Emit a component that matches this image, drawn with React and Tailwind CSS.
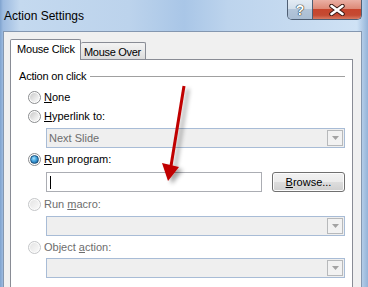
import React from "react";

function Radio({ checked = false, disabled = false }) {
  return (
    <div
      className={
        "flex h-[13px] w-[13px] shrink-0 items-center justify-center rounded-full border " +
        (disabled ? "border-[#c4c6c8] bg-[#fbfbfb]" : "border-[#8a8c8e] bg-white")
      }
    >
      {checked ? (
        <div className="h-[9px] w-[9px] rounded-full border border-[#1a4f7a] bg-[radial-gradient(circle_at_40%_35%,#a9e3ff_0%,#3fa0dc_45%,#0d4f86_100%)]" />
      ) : (
        <div
          className={
            "h-[9px] w-[9px] rounded-full " +
            (disabled
              ? "bg-[linear-gradient(135deg,#e4e4e4,#f9f9f9)]"
              : "bg-[linear-gradient(135deg,#c9c9c9,#eeeeee_70%,#f7f7f7)]")
          }
        />
      )}
    </div>
  );
}

function ComboBox({ text }) {
  return (
    <div className="ml-[35px] mr-[7px] flex h-[20px] items-center border border-[#a8bcd6] bg-[#efefef] pr-[1px]">
      <div className="flex-1 pl-[2px] text-[11px] leading-[14px] text-[#6d6d6d]">{text}</div>
      <div className="flex h-[16px] w-[16px] items-center justify-center border border-[#b7b9bb] bg-[#f2f2f2]">
        <svg width="7" height="4" viewBox="0 0 7 4">
          <polygon points="0,0 7,0 3.5,4" fill="#a3a3a3" />
        </svg>
      </div>
    </div>
  );
}

export default function App() {
  return (
    <div className="relative h-[287px] w-[368px] overflow-hidden bg-[linear-gradient(90deg,#7fa3cf_0px,#9dbbe0_3px,#c4d9ef_20px,#bcd3ec_35%,#a9c6e7_50%,#bdd4ed_62%,#c8dcf1_85%,#cfe2f5_97%,#93b3d8_100%)] font-['Liberation_Sans',Arial,sans-serif] text-black">
      {/* Title bar */}
      <div className="flex h-[31px]">
        <div className="pl-[4px] pt-[9px] text-[12px] leading-[14px] text-black">Action Settings</div>
        <div className="ml-auto mr-[6px] flex h-[20px] overflow-hidden rounded-b-[5px] border border-t-0 border-[#4f5f74]">
          <div className="flex w-[25px] items-center justify-center border-r border-[#4f5f74] bg-[linear-gradient(180deg,#e3ebf4_0%,#d3dfeb_45%,#b3c5d9_50%,#a9bdd3_100%)]">
            <span className="text-[14px] font-bold leading-[14px] text-white [text-shadow:0_0_1px_#233,0_0_1px_#233,0_0_1px_#233]">?</span>
          </div>
          <div className="flex w-[48px] items-center justify-center bg-[linear-gradient(180deg,#eab0a4_0%,#dd8a78_45%,#c7452d_50%,#c44a32_80%,#d87b63_100%)]">
            <svg width="18" height="12" viewBox="0 0 18 12">
              <path d="M3.5 2 L14.5 10 M14.5 2 L3.5 10" stroke="#3b1a14" strokeWidth="4.5" strokeLinecap="round" />
              <path d="M3.5 2 L14.5 10 M14.5 2 L3.5 10" stroke="#ffffff" strokeWidth="2.6" strokeLinecap="round" />
            </svg>
          </div>
        </div>
      </div>

      {/* Dialog body */}
      <div className="ml-[3px] mr-[6px] h-[256px] border-l border-r border-t border-[#8497b0] bg-[#f0f0f0] pl-[6px] pr-[8px] pt-[7px]">
        {/* Tabs */}
        <div className="flex h-[20px] items-end">
          <div className="relative z-10 mb-[-1px] h-[21px] w-[71px] rounded-t-[2px] border border-b-0 border-[#898c95] bg-white pl-[6px] pt-[3px] text-[11px] leading-[13px] tracking-[-0.2px] whitespace-nowrap">
            Mouse Click
          </div>
          <div className="h-[17px] w-[65px] rounded-t-[2px] border border-b-0 border-l-0 border-[#898c95] bg-[linear-gradient(180deg,#f3f3f3,#e9e9e9_50%,#dcdcdc)] pl-[3px] pt-[3px] text-[11px] leading-[13px] tracking-[-0.3px] whitespace-nowrap">
            Mouse Over
          </div>
        </div>

        {/* Panel */}
        <div className="h-[240px] border border-[#898c95] bg-white">
          {/* Group header */}
          <div className="mt-[9px] flex h-[14px] items-center pl-[8px] pr-[7px]">
            <span className="text-[11px] leading-[14px] tracking-[-0.2px] whitespace-nowrap">Action on click</span>
            <div className="ml-[4px] h-px flex-1 bg-[#a0a0a0]" />
          </div>

          {/* None */}
          <div className="mt-[7px] flex h-[14px] items-center pl-[17px]">
            <Radio />
            <span className="ml-[3px] text-[11px] leading-[14px]"><span className="underline">N</span>one</span>
          </div>

          {/* Hyperlink */}
          <div className="mt-[5px] flex h-[14px] items-center pl-[17px]">
            <Radio />
            <span className="ml-[3px] text-[11px] leading-[14px]"><span className="underline">H</span>yperlink to:</span>
          </div>
          <div className="mt-[5px]">
            <ComboBox text="Next Slide" />
          </div>

          {/* Run program */}
          <div className="mt-[4px] flex h-[14px] items-center pl-[17px]">
            <Radio checked />
            <span className="ml-[3px] text-[11px] leading-[14px]"><span className="underline">R</span>un program:</span>
          </div>
          <div className="mt-[6px] flex h-[20px] pl-[35px]">
            <div className="flex h-[20px] w-[216px] items-center border border-[#abadb3] bg-white pl-[3px]">
              <div className="h-[13px] w-px bg-black" />
            </div>
            <div className="ml-[10px] flex h-[20px] w-[73px] items-center justify-center rounded-[3px] border border-[#707070] bg-[linear-gradient(180deg,#f2f2f2_0%,#ebebeb_50%,#dddddd_51%,#cfcfcf_100%)] text-[11px] leading-[14px] shadow-[inset_0_0_0_1px_#fcfcfc]">
              <span><span className="underline">B</span>rowse...</span>
            </div>
          </div>

          {/* Run macro */}
          <div className="mt-[5px] flex h-[14px] items-center pl-[17px]">
            <Radio disabled />
            <span className="ml-[3px] text-[11px] leading-[14px] text-[#6d6d6d]">Run <span className="underline">m</span>acro:</span>
          </div>
          <div className="mt-[5px]">
            <ComboBox text="" />
          </div>

          {/* Object action */}
          <div className="mt-[4px] flex h-[14px] items-center pl-[17px]">
            <Radio disabled />
            <span className="ml-[3px] text-[11px] leading-[14px] text-[#6d6d6d]">Object <span className="underline">a</span>ction:</span>
          </div>
          <div className="mt-[4px]">
            <ComboBox text="" />
          </div>
        </div>
      </div>

      {/* Red annotation arrow */}
      <svg className="pointer-events-none absolute left-0 top-0" width="368" height="287" viewBox="0 0 368 287">
        <defs>
          <filter id="sh" x="-50%" y="-50%" width="200%" height="200%">
            <feDropShadow dx="4" dy="3" stdDeviation="2" floodColor="#000" floodOpacity="0.35" />
          </filter>
        </defs>
        <g filter="url(#sh)">
          <line x1="184" y1="86" x2="171" y2="166" stroke="#c00000" strokeWidth="3" />
          <polygon points="162,163 179,167 168,181" fill="#c00000" />
        </g>
      </svg>
    </div>
  );
}
